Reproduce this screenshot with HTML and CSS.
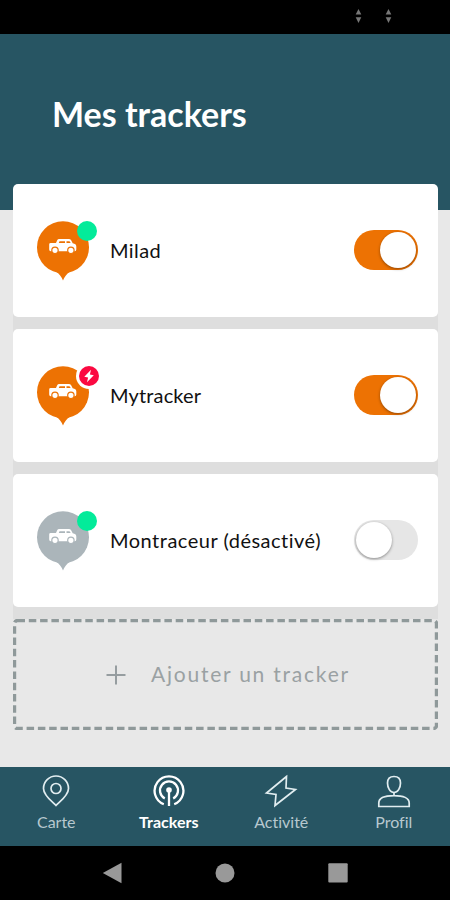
FILE: index.html
```
<!DOCTYPE html>
<html lang="fr">
    <head>
    <meta charset="utf-8">
    <meta name="viewport" content="width=device-width, initial-scale=1.0">
    <title>Mes trackers</title>
    <link rel="stylesheet" href="styles.css">
    </head>

    <body>
    <svg class="defs" aria-hidden="true">
        <symbol id="pin" viewBox="0 0 52 60">
            <circle cx="26" cy="26.300" r="26" fill="currentColor"/>
            <path d="M19.500 51Q23.500 53.500 26 59.500Q28.500 53.500 32.500 51z" fill="currentColor"/>
            <path d="M12.200 25.700v-2.400q0-1.300 1.500-1.300h5.300l1.200-2.800q.5-1.300 2-1.300h9.600q1.500 0 2.200 1.200l1.700 3.200q3.600.5 3.600 3.300v2.900q0 1.700-1.500 1.700h-24.100q-1.500 0-1.500-1.700z" fill="#fff"/>
            <path d="M22.500 20.300h5.500v1.700h-6.200zM29.500 20.300h3l1.200 1.700h-4.200z" fill="currentColor"/>
            <g fill="#fff" stroke="currentColor" stroke-width="1.200">
                <circle cx="18" cy="29.300" r="3.200"/>
                <circle cx="33.900" cy="29.300" r="3.200"/>
            </g>
        </symbol>
    </svg>
    <div class="status">
        <svg width="7" height="14" viewBox="0 0 7 14"><path d="M3.500 0L6.300 5.600H.7zM.7 8.300h5.600L3.500 14z"/></svg>
        <svg width="7" height="14" viewBox="0 0 7 14"><path d="M3.500 0L6.300 5.600H.7zM.7 8.300h5.600L3.500 14z"/></svg>
    </div>
    <header>
        <h1>Mes trackers</h1>
    </header>
    <main>
        <div class="list">
            <div class="card">
                <div class="marker">
                    <svg width="52" height="60"><use href="#pin"/></svg>
                    <span class="dot"></span>
                </div>
                <span class="name milad">Milad</span>
                <span class="switch on"></span>
            </div>
            <div class="card">
                <div class="marker">
                    <svg width="52" height="60"><use href="#pin"/></svg>
                    <span class="dot alert">
                        <svg width="20" height="20" viewBox="0 0 20 20"><path d="M12 3.800L5.300 10.700l3.800.8L8 16.200l6.800-6.900-3.900-.8z" fill="#fff"/></svg>
                    </span>
                </div>
                <span class="name mytracker">Mytracker</span>
                <span class="switch on"></span>
            </div>
            <div class="card">
                <div class="marker off">
                    <svg width="52" height="60"><use href="#pin"/></svg>
                    <span class="dot"></span>
                </div>
                <span class="name montraceur">Montraceur (désactivé)</span>
                <span class="switch"></span>
            </div>
        </div>
        <div class="add">
            <svg class="dashes" width="425" height="111"><rect x="1.500" y="1.500" width="422" height="108" rx="3"/></svg>
            <svg class="plus" width="20" height="20" viewBox="0 0 20 20"><path d="M10 .5v19M.5 10h19"/></svg>
            <span>Ajouter un tracker</span>
        </div>
    </main>
    <nav>
        <a class="carte">
            <svg width="34" height="34" viewBox="0 0 34 34"><path d="M17 31.500C13 27.500 4.500 21.500 4.500 14.500a12.500 12.500 0 0 1 25 0C29.500 21.500 21 27.500 17 31.500z"/><circle cx="17" cy="14.500" r="5"/></svg>
            <span>Carte</span>
        </a>
        <a class="trackers active">
            <svg width="34" height="34" viewBox="0 0 34 34"><path d="M11.800 30.200a14.400 14.400 0 1 1 10.400 0"/><path d="M12.800 24.400a9 9 0 1 1 8.400 0"/><path d="M17 16v16"/><circle class="full" cx="17" cy="16" r="2.800"/></svg>
            <span>Trackers</span>
        </a>
        <a class="activite">
            <svg width="34" height="34" viewBox="0 0 34 34"><path d="M22.500 2.500L2.500 19l9.500 1.500L11 31.500 31.500 15.500 22 14z"/></svg>
            <span>Activité</span>
        </a>
        <a class="profil">
            <svg width="34" height="34" viewBox="0 0 34 34"><path d="M17 2.500c4.300 0 6.500 2.700 6.500 6.500 0 5-2.700 9.500-6.500 9.500S10.500 14 10.500 9c0-3.800 2.200-6.500 6.500-6.500z"/><path d="M17 18.500v3M1.800 32.500v-3.500C1.800 24 7.500 21.700 17 21.700S32.200 24 32.200 29v3.500z"/></svg>
            <span>Profil</span>
        </a>
    </nav>
    <div class="system">
        <svg width="20" height="22" viewBox="0 0 20 22"><path d="M19.500 .8v20.400L.8 11z"/></svg>
        <svg width="20" height="20" viewBox="0 0 20 20"><circle cx="10" cy="10" r="9.500"/></svg>
        <svg width="20" height="20" viewBox="0 0 20 20"><rect x=".3" y=".2" width="19.400" height="19.400" rx="1"/></svg>
    </div>
    </body>
</html>
```
FILE: styles.css
```
body {
    margin: 0;
    width: 450px;
    height: 900px;
    display: flex;
    flex-direction: column;
    overflow: hidden;
    background-color: #e8e8e8;
    font-family: Lato, "Liberation Sans", sans-serif;
    font-variant-ligatures: none;
}
svg{
    display: block;
}
.defs{
    position: absolute;
    width: 0;
    height: 0;
}
.status{
    height: 34px;
    box-sizing: border-box;
    padding: 9px 58px 0 0;
    display: flex;
    justify-content: flex-end;
    gap: 23px;
    background-color: #000;
    fill: #777;
}
header{
    height: 176px;
    background-color: #275563;
}
h1{
    margin: 0;
    padding: 59px 0 0 52px;
    font-size: 34px;
    line-height: 42px;
    font-weight: bold;
    color: white;
}
main{
    flex: 1;
    width: 425px;
    margin: -26px 0 0 13px;
}
.list{
    display: flex;
    flex-direction: column;
    gap: 12px;
    padding-bottom: 12px;
    background: linear-gradient(transparent 26px, #dedede 26px);
}
.card{
    height: 133px;
    box-sizing: border-box;
    padding: 0 20px 1px 24px;
    display: flex;
    align-items: center;
    border-radius: 5px;
    background-color: white;
}
.marker{
    position: relative;
    width: 73px;
    padding-top: 1px;
    color: #ed7203;
}
.marker.off{
    color: #abb5ba;
}
.dot{
    position: absolute;
    left: 40px;
    top: 1px;
    width: 20px;
    height: 20px;
    border-radius: 50%;
    background-color: #03eb9a;
}
.dot.alert{
    left: 42px;
    background-color: #fb0941;
    box-shadow: 0 0 0 3px white;
}
.name{
    flex: 1;
    padding-bottom: 1px;
    font-size: 20px;
    line-height: 24px;
    white-space: nowrap;
    color: #111;
}
.milad{
    letter-spacing: 0.4px;
}
.mytracker{
    letter-spacing: 0.15px;
}
.montraceur{
    letter-spacing: 0.5px;
}
.switch{
    width: 64px;
    height: 40px;
    box-sizing: border-box;
    padding: 2px;
    border-radius: 20px;
    background-color: #e6e6e6;
}
.switch::before{
    content: "";
    display: block;
    width: 36px;
    height: 36px;
    border-radius: 50%;
    background-color: white;
    box-shadow: 0 1px 3px rgba(0,0,0,0.4);
}
.switch.on{
    background-color: #ed7203;
}
.switch.on::before{
    margin-left: 24px;
}
.add{
    position: relative;
    height: 111px;
    display: flex;
    align-items: center;
    padding-left: 93px;
    gap: 25px;
    font-size: 21px;
    letter-spacing: 1.77px;
    white-space: nowrap;
    color: #9aa1a3;
}
.add span{
    padding-bottom: 2px;
}
.dashes{
    position: absolute;
    left: 0;
    top: 0;
    fill: none;
    stroke: #8f999a;
    stroke-width: 3.4;
    stroke-dasharray: 7.500 3.800;
}
.plus{
    stroke: #969da0;
    stroke-width: 2;
}
nav{
    height: 79px;
    box-sizing: border-box;
    padding-top: 7px;
    display: grid;
    grid-template-columns: repeat(4, 1fr);
    background-color: #275563;
    color: #b7c8cf;
}
nav a{
    display: flex;
    flex-direction: column;
    align-items: center;
    gap: 3px;
    font-size: 16px;
    line-height: 22px;
}
nav svg{
    fill: none;
    stroke: #e1edf0;
    stroke-width: 1.700;
}
.active{
    font-weight: bold;
    color: white;
}
.active svg{
    stroke: white;
    stroke-width: 2.300;
}
.full{
    fill: white;
    stroke: none;
}
.system{
    height: 54px;
    display: flex;
    align-items: center;
    justify-content: center;
    gap: 93px;
    background-color: #000;
    fill: #999;
}
```
